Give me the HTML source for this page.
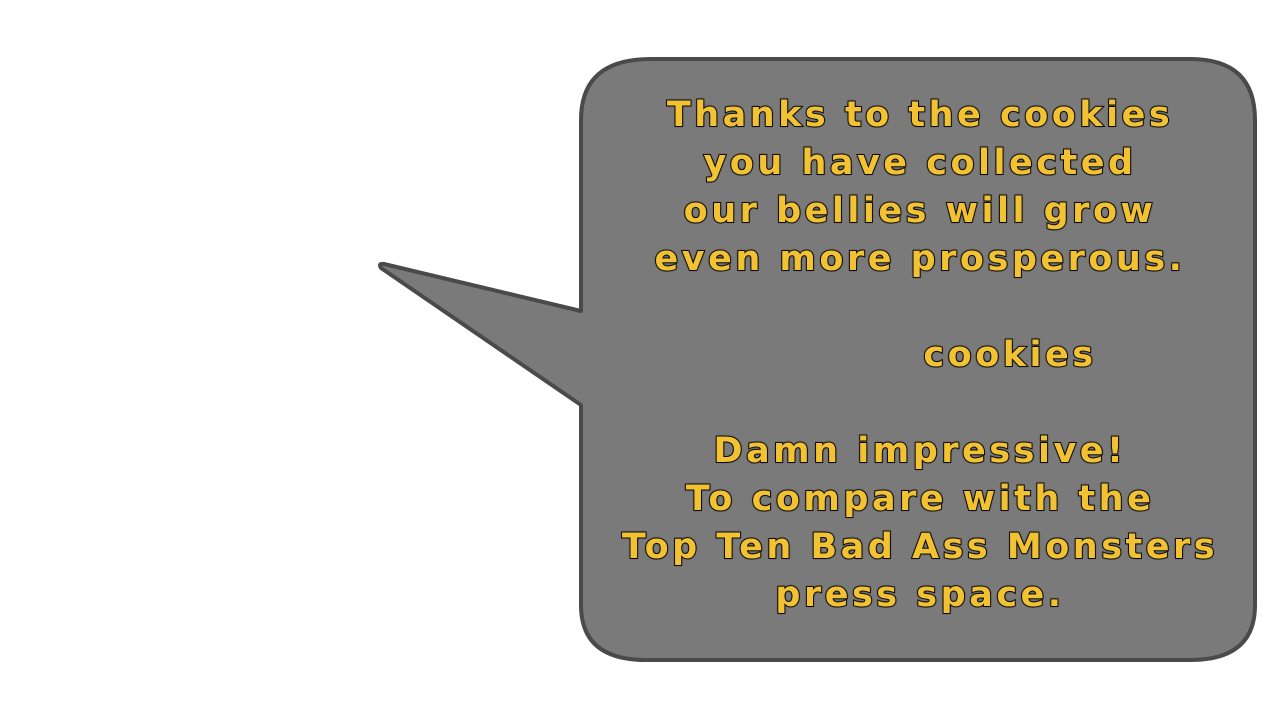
<!DOCTYPE html>
<html><head><style>
html,body{margin:0;padding:0;background:#fff;width:1280px;height:720px;overflow:hidden}
svg{position:absolute;left:0;top:0}
.t{position:absolute;left:590px;width:660px;text-align:center;font-family:"DejaVu Sans","Liberation Sans",sans-serif;font-size:35px;font-weight:bold;color:#f2c232;letter-spacing:3.5px;line-height:48px;-webkit-text-stroke:2px #111;paint-order:stroke fill;text-shadow:0 0 2px #000}
</style></head><body>
<svg width="1280" height="720">
<path d="M651,59 H1190 Q1255,59 1255,120 V605 Q1255,660 1190,660 H646 Q581,660 581,605 V405 L381,268 Q378,263 384,264 L581,311 V120 Q581,59 651,59 Z" fill="#7a7a7a" stroke="#4a4a4a" stroke-width="4" stroke-linejoin="round"/>
</svg>
<div class="t" style="top:91px">Thanks to the cookies<br>you have collected<br>our bellies will grow<br>even more prosperous.</div>
<div class="t" style="top:331px;left:910px;width:200px">cookies</div>
<div class="t" style="top:427px">Damn impressive!<br>To compare with the<br>Top Ten Bad Ass Monsters<br>press space.</div>
</body></html>
